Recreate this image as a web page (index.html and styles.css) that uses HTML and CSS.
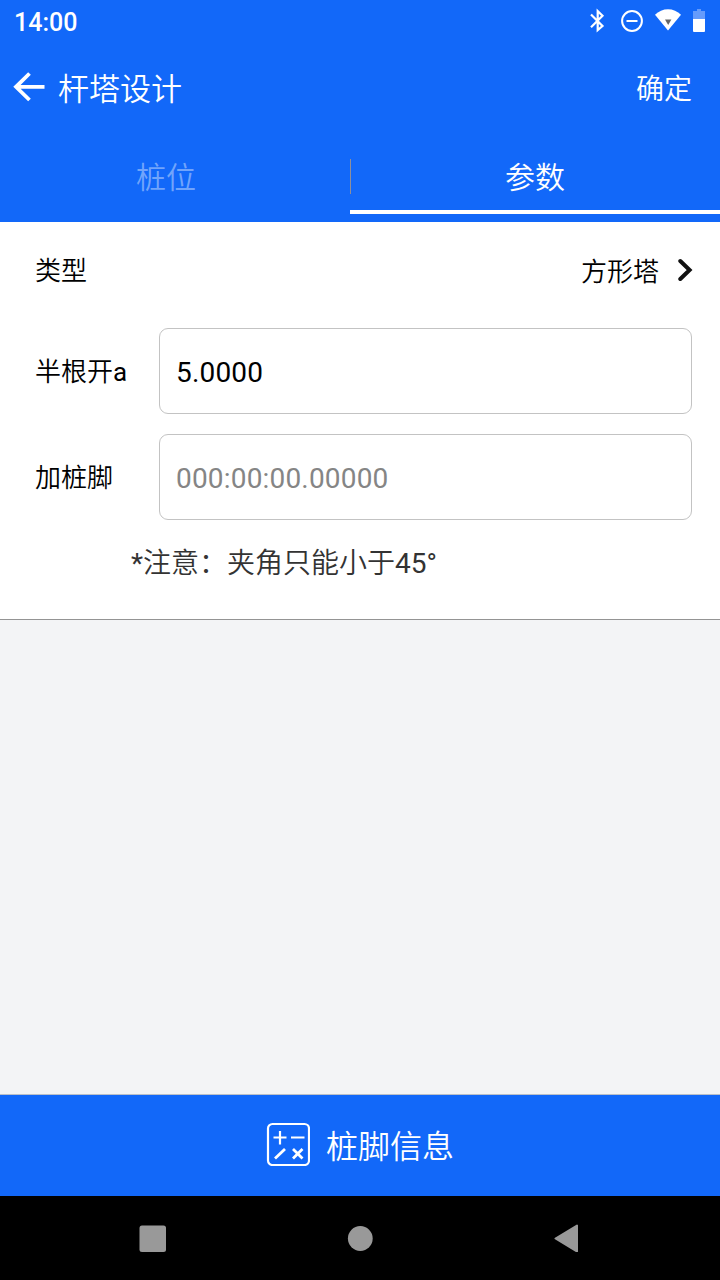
FILE: index.html
```html
<!DOCTYPE html>
<html lang="zh-CN">
<head>
    <meta charset="UTF-8">
    <meta name="viewport" content="width=device-width, initial-scale=1.0">
    <title>杆塔设计</title>
    <link rel="stylesheet" href="styles.css">
</head>
<body>
    <div class="status-bar">
        <span class="clock">14:00</span>
        <svg class="status-icons" width="130" height="44" viewBox="0 0 130 44">
            <!-- bluetooth -->
            <path d="M11 14.500L22.500 26L17.700 30.200V11.200L22.500 15.800L11 27.300" fill="none" stroke="#fff" stroke-width="2.200"/>
            <!-- do not disturb -->
            <circle cx="52" cy="21" r="9.900" fill="none" stroke="#fff" stroke-width="2"/>
            <path d="M46.500 21h11" stroke="#fff" stroke-width="2"/>
            <!-- wifi -->
            <path d="M75 14.800C82 7.300 94 7.300 101 14.800L88 30.500z" fill="#fff"/>
            <path d="M85 19.500h6.400L88.200 25z" fill="#666"/>
            <!-- battery -->
            <path d="M117 9h4v2h4v8h-12v-8h4z" fill="#659bfb"/>
            <path d="M113 19h12v12a1 1 0 0 1-1 1h-10a1 1 0 0 1-1-1z" fill="#fff"/>
        </svg>
    </div>

    <div class="header">
        <svg class="back" width="34" height="34" viewBox="0 0 34 34">
            <path d="M32.500 16.800H4M17.500 3.500L4 16.800L17.500 30" fill="none" stroke="#fff" stroke-width="3.800"/>
        </svg>
        <div class="title">杆塔设计</div>
        <div class="confirm">确定</div>
    </div>

    <div class="tabs">
        <div class="tab">桩位</div>
        <div class="tab active">参数</div>
    </div>

    <div class="form">
        <div class="type-row">
            <div class="label">类型</div>
            <div class="type-value">方形塔</div>
            <svg class="arrow" width="16" height="24" viewBox="0 0 16 24">
                <path d="M2.300 3L11.600 12L2.300 21" fill="none" stroke="#111" stroke-width="4" stroke-linecap="round"/>
            </svg>
        </div>
        <div class="form-row">
            <label class="label" for="half">半根开<span class="latin">a</span></label>
            <input class="field" id="half" type="text" value="5.0000">
        </div>
        <div class="form-row">
            <label class="label" for="angle">加桩脚</label>
            <input class="field" id="angle" type="text" placeholder="000:00:00.00000">
        </div>
        <div class="note"><span class="latin">*</span>注意：夹角只能小于<span class="latin">45°</span></div>
    </div>

    <div class="content"></div>

    <div class="bottom-btn">
        <svg class="calc" width="44" height="44" viewBox="0 0 44 44" fill="none" stroke="#fff">
            <rect x="2" y="2" width="41" height="41" rx="4.500" stroke-width="2.200"/>
            <path d="M7.500 15.500H20.500M14 9V22.500M25 15.500H38.500" stroke-width="2.200"/>
            <path d="M9 36.500L19 27M27 27L36.500 36.500M36.500 27L27 36.500" stroke-width="2.800"/>
        </svg>
        <span class="bottom-text">桩脚信息</span>
    </div>

    <div class="nav-bar">
        <svg width="28" height="28" viewBox="0 0 28 28"><rect x="1.500" y="1.500" width="26.500" height="26.500" rx="2.500" fill="#999"/></svg>
        <svg width="28" height="28" viewBox="0 0 28 28"><circle cx="15.300" cy="14.500" r="12.400" fill="#999"/></svg>
        <svg width="28" height="28" viewBox="0 0 28 28"><path d="M3.500 14.500L25 1.500V27.500z" fill="#999" stroke="#999" stroke-width="2" stroke-linejoin="round"/></svg>
    </div>
</body>
</html>
```
FILE: styles.css
```css
* {
    box-sizing: border-box;
}

body {
    font-family: Roboto, "Noto Sans CJK SC", sans-serif;
    font-weight: 350;
    background-color: #f3f4f6;
    margin: 0;
    height: 1280px;
    display: flex;
    flex-direction: column;
    color: #000;
    overflow: hidden;
}

.latin {
    font-weight: 400;
}

.status-bar {
    display: flex;
    justify-content: space-between;
    height: 44px;
    padding-left: 14px;
    padding-right: 10px;
    background-color: #1268f9;
    color: white;
}

.clock {
    font-size: 25px;
    font-weight: 500;
    line-height: 45px;
}

.header {
    display: flex;
    align-items: center;
    height: 88px;
    padding: 0 28px 0 12px;
    background-color: #1268f9;
    color: white;
}

.back {
    margin-top: -2px;
    margin-right: 12px;
}

.title {
    flex: 1;
    font-size: 31px;
    padding-bottom: 4px;
}

.confirm {
    font-size: 28px;
    padding-bottom: 3px;
}

.tabs {
    display: flex;
    height: 90px;
    background-color: #1268f9;
    color: white;
    font-size: 30px;
    line-height: 92px;
    text-align: center;
}

.tab {
    width: 350px;
    height: 82px;
    padding-right: 18px;
    color: #71a4fb;
}

.tab.active {
    width: 370px;
    padding-right: 0;
    color: white;
    border-bottom: 4px solid white;
    background: linear-gradient(#8f8f9a, #8f8f9a) 0 27px / 1px 35px no-repeat;
}

.form {
    height: 398px;
    padding: 0 28px 0 35px;
    background-color: white;
    border-bottom: 1px solid #949494;
}

.type-row {
    display: flex;
    align-items: center;
    height: 96px;
    font-size: 26px;
}

.type-value {
    margin-left: auto;
    margin-right: 19px;
    padding-bottom: 2px;
}

.arrow {
    margin-right: -2px;
}

.form-row {
    display: flex;
    align-items: center;
    height: 86px;
    margin-top: 10px;
    margin-bottom: 20px;
}

.form-row + .form-row {
    margin-top: 0;
}

.label {
    width: 124px;
    font-size: 26px;
    padding-bottom: 4px;
}

.field {
    flex: 1;
    height: 86px;
    padding: 3px 16px 0;
    border: 1px solid #c3c3c3;
    border-radius: 9px;
    background-color: white;
    font-family: inherit;
    font-size: 28px;
    letter-spacing: 0.18px;
    color: #000;
    outline: none;
}

.field::placeholder {
    color: #858585;
}

.note {
    margin-left: 96px;
    font-size: 28px;
    line-height: 48px;
    color: #333;
}

.content {
    flex: 1;
}

.bottom-btn {
    display: flex;
    align-items: center;
    justify-content: center;
    height: 102px;
    padding-bottom: 3px;
    border-top: 1px solid #b9bfc9;
    background-color: #1268f9;
    color: white;
    font-size: 32px;
}

.calc {
    margin-right: 16px;
}

.bottom-text {
    padding-bottom: 1px;
}

.nav-bar {
    display: flex;
    justify-content: space-between;
    align-items: center;
    height: 84px;
    padding: 0 140px 0 138px;
    background-color: #000;
}
```
